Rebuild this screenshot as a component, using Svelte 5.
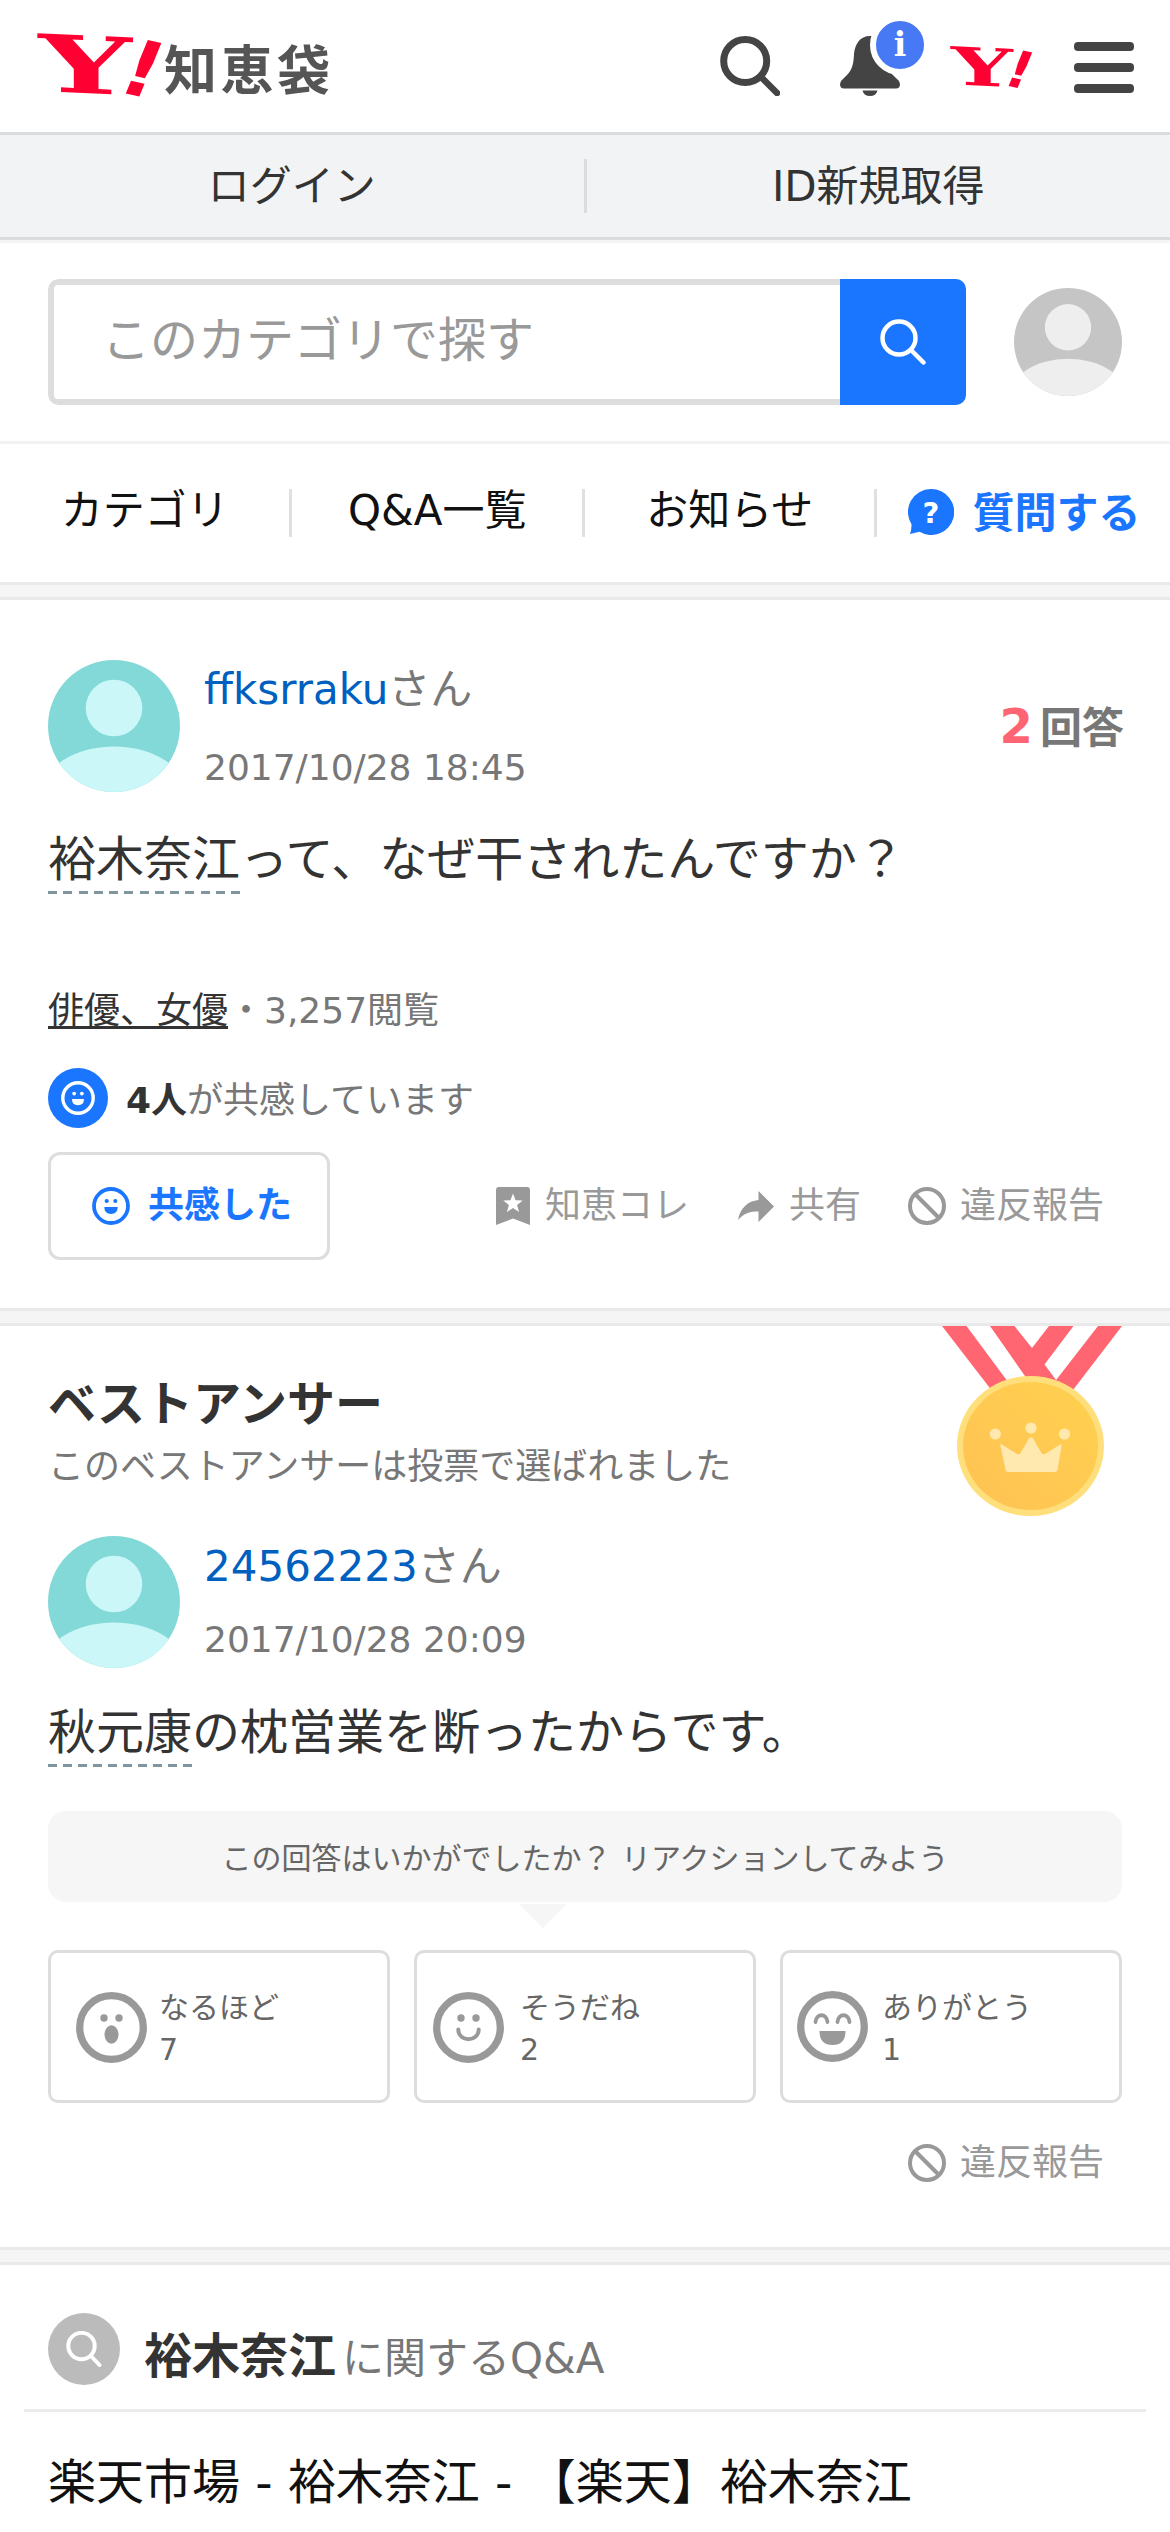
<script>
  const navItems = ['カテゴリ', 'Q&A一覧', 'お知らせ'];

  const reactions = [
    { face: 'surprised', label: 'なるほど', count: 7, pad: 25, gap: 12, top: 2 },
    { face: 'smile', label: 'そうだね', count: 2, pad: 16, gap: 16, top: 1 },
    { face: 'laugh', label: 'ありがとう', count: 1, pad: 14, gap: 14, top: 0 }
  ];
</script>

{#snippet yLogo()}
  <svg class="y-logo" viewBox="0 0 117 62" role="img" aria-label="Y!">
    <g fill="#ff0033" font-family="'DejaVu Serif', serif" font-weight="700">
      <text transform="matrix(1.53 0.07 0 1.1 -0.5 58)" font-size="72" textLength="61" lengthAdjust="spacingAndGlyphs">Y</text>
      <text transform="matrix(1.3 0.3 -0.42 1.02 76 58)" font-size="72" font-family="'DejaVu Sans', sans-serif" textLength="27" lengthAdjust="spacingAndGlyphs">!</text>
    </g>
  </svg>
{/snippet}

{#snippet avatar(id, bg, fg)}
  <svg class="avatar" viewBox="0 0 132 132">
    <clipPath {id}><circle cx="66" cy="66" r="66" /></clipPath>
    <g clip-path="url(#{id})">
      <rect width="132" height="132" fill={bg} />
      <circle cx="66" cy="48" r="28.3" fill={fg} />
      <ellipse cx="66" cy="133.5" rx="72" ry="47" fill={fg} />
    </g>
  </svg>
{/snippet}

{#snippet smallFace()}
  <svg class="small-face" viewBox="0 0 38 38">
    <circle cx="19" cy="19" r="17" fill="none" stroke="currentColor" stroke-width="3.8" />
    <circle cx="14.7" cy="14" r="2.1" fill="currentColor" />
    <circle cx="23.3" cy="14" r="2.1" fill="currentColor" />
    <path d="M12.3 20h13.4q0 7-6.7 7t-6.7-7z" fill="currentColor" />
  </svg>
{/snippet}

{#snippet banIcon()}
  <svg width="38" height="38" viewBox="0 0 38 38" fill="none" stroke="#999" stroke-width="4">
    <circle cx="19" cy="19" r="17" />
    <path d="M7 7l24 24" />
  </svg>
{/snippet}

<div class="page">
  <header class="masthead">
    <div class="brand">
      {@render yLogo()}
      <span class="brand-name">知恵袋</span>
    </div>
    <div class="tools">
      <svg width="60" height="60" viewBox="0 0 60 60" fill="none" stroke="#444">
        <circle cx="25.2" cy="25" r="21.5" stroke-width="7" />
        <path d="M41 41l16 16" stroke-width="6.5" stroke-linecap="round" />
      </svg>
      <div class="bell">
        <svg width="60" height="60" viewBox="0 0 60 60" fill="#444">
          <path d="M30 0C20 0 15 8 14 18C13.400 30 12 35 3 43Q0 45 0 48Q0 52.500 4 52.500H56Q60 52.500 60 48Q60 45 57 43C48 35 46.600 30 46 18C45 8 40 0 30 0z" />
          <path d="M22.500 54.500h15q-1.500 5.500-7.500 5.500t-7.500-5.500z" />
        </svg>
        <span class="bell-badge">i</span>
      </div>
      <div class="mini-logo">{@render yLogo()}</div>
      <div class="burger"><i></i><i></i><i></i></div>
    </div>
  </header>

  <div class="login">
    <a href="#login">ログイン</a>
    <a href="#signup">ID新規取得</a>
  </div>

  <div class="search">
    <div class="search-box">
      <span class="placeholder">このカテゴリで探す</span>
      <span class="search-btn">
        <svg width="46" height="46" viewBox="0 0 46 46" fill="none" stroke="#fff">
          <circle cx="19" cy="19" r="16.500" stroke-width="4.500" />
          <path d="M31 31l12.500 12.500" stroke-width="4.500" stroke-linecap="round" />
        </svg>
      </span>
    </div>
    <div class="me">{@render avatar('me', '#c5c5c5', '#eeeeee')}</div>
  </div>

  <nav class="nav">
    {#each navItems as item}
      <a href="#nav">{item}</a>
    {/each}
    <a href="#ask" class="ask">
      <svg width="46" height="46" viewBox="0 0 46 46">
        <path d="M23 0a23 23 0 1 1-11.500 42.800L2 45Q3.500 41 3.600 35.500A23 23 0 0 1 23 0z" fill="#1a75ff" />
        <text x="23" y="33.500" text-anchor="middle" font-size="29" font-weight="700" fill="#fff" font-family="'DejaVu Sans', sans-serif">?</text>
      </svg>
      <b>質問する</b>
    </a>
  </nav>

  <div class="divider"></div>

  <section class="question">
    <div class="user">
      {@render avatar('asker', '#82d9d8', '#cbf7f8')}
      <div class="user-info">
        <p class="name"><a href="#user">ffksrraku</a>さん</p>
        <p class="date">2017/10/28 18:45</p>
      </div>
      <p class="answers"><strong>2</strong>回答</p>
    </div>
    <p class="body-text"><span class="keyword kw-four">裕木奈江</span>って、なぜ干されたんですか？</p>
    <p class="meta"><a href="#category">俳優、女優</a>・3,257閲覧</p>
    <div class="empathy">
      <span class="empathy-icon">{@render smallFace()}</span>
      <p><b>4人</b>が共感しています</p>
    </div>
    <div class="actions">
      <button class="empathy-btn">{@render smallFace()}<span>共感した</span></button>
      <span class="action">
        <svg width="34" height="38" viewBox="0 0 34 38">
          <path d="M3 0h28q3 0 3 3v35l-17-6.500L0 38V3q0-3 3-3z" fill="#999" />
          <path d="M17 6.500l2.600 6.800 7.100.3-5.600 4.400 2 7.100-6.100-4.100-6.100 4.100 2-7.100-5.600-4.400 7.100-.3z" fill="#fff" />
        </svg>
        知恵コレ
      </span>
      <span class="action share">
        <svg width="36" height="31" viewBox="0 0 36 31">
          <path d="M20.500 0L36 15.500 20.500 31V20.500C12 20.500 6 22 0 29C2 17 10 10 20.500 9z" fill="#999" />
        </svg>
        共有
      </span>
      <span class="action report">{@render banIcon()}違反報告</span>
    </div>
  </section>

  <div class="divider"></div>

  <section class="best">
    <svg class="medal" width="180" height="190" viewBox="0 0 180 190">
      <defs>
        <linearGradient id="gold" x1="0" y1="1" x2="1" y2="0">
          <stop offset="0" stop-color="#ffc254" />
          <stop offset="1" stop-color="#ffd14f" />
        </linearGradient>
      </defs>
      <g fill="#ff6672">
        <path d="M0 0h24.500L69 60 54 70z" />
        <path d="M48 0h24.500L90 22 107 0h24.500L102.500 38.500 120 62 90 60z" />
        <path d="M156 0h24L131 64 111 58z" />
      </g>
      <ellipse cx="88.500" cy="120" rx="73.500" ry="70" fill="#ffdf7c" />
      <ellipse cx="88.500" cy="120" rx="67.500" ry="64" fill="url(#gold)" />
      <g fill="#ffe9ae">
        <circle cx="53.300" cy="108" r="5.600" />
        <circle cx="89" cy="102" r="5.600" />
        <circle cx="122.500" cy="108" r="5.600" />
        <path d="M59 118L75 128Q77 129 78.500 127L87 112.500Q89 110 91 112.500L99.500 127Q101 129 103 128L119 118Q120 118 119.500 120L115.500 144Q115 146 113 146H66Q64 146 63.600 144L58.500 120Q58 118 59 118z" />
      </g>
    </svg>
    <h2>ベストアンサー</h2>
    <p class="best-sub">このベストアンサーは投票で選ばれました</p>
    <div class="user">
      {@render avatar('answerer', '#82d9d8', '#cbf7f8')}
      <div class="user-info tight">
        <p class="name"><a href="#user">24562223</a>さん</p>
        <p class="date">2017/10/28 20:09</p>
      </div>
    </div>
    <p class="body-text"><span class="keyword">秋元康</span>の枕営業を断ったからです。</p>
    <div class="bubble">この回答はいかがでしたか？ リアクションしてみよう</div>
    <div class="reactions">
      {#each reactions as r}
        <button class="reaction" style="padding-left: {r.pad}px; gap: {r.gap}px">
          <svg width="71" height="71" viewBox="0 0 71 71" fill="#999" style="margin-top: {r.top}px">
            <circle cx="35.500" cy="35.500" r="31.800" fill="none" stroke="#999" stroke-width="7.300" />
            {#if r.face === 'surprised'}
              <circle cx="28" cy="26" r="3.700" />
              <circle cx="43" cy="26" r="3.700" />
              <ellipse cx="35.500" cy="42.500" rx="7" ry="9.300" />
            {:else if r.face === 'smile'}
              <circle cx="28" cy="26" r="3.700" />
              <circle cx="43" cy="26" r="3.700" />
              <path d="M25.300 37.500c0 13 20.400 13 20.400 0" fill="none" stroke="#999" stroke-width="4" stroke-linecap="round" />
            {:else}
              <path d="M18.500 31c1-9 11-9 12 0M40.500 31c1-9 11-9 12 0" fill="none" stroke="#999" stroke-width="3.800" stroke-linecap="round" />
              <path d="M22.500 40h26q0 14-13 14t-13-14z" />
            {/if}
          </svg>
          <span>{r.label}<br />{r.count}</span>
        </button>
      {/each}
    </div>
    <p class="best-report">{@render banIcon()}違反報告</p>
  </section>

  <div class="divider"></div>

  <section class="related">
    <div class="related-head">
      <span class="related-icon">
        <svg width="36" height="36" viewBox="0 0 36 36" fill="none" stroke="#fff" stroke-width="4">
          <circle cx="15.500" cy="15" r="13.200" />
          <path d="M25 25l8.500 9" stroke-linecap="round" />
        </svg>
      </span>
      <p><b>裕木奈江</b>に関するQ&A</p>
    </div>
    <a class="related-link" href="#q">楽天市場 - 裕木奈江 - 【楽天】裕木奈江</a>
  </section>
</div>

<style>
  :global(body) {
    background: #fff;
  }
  .page {
    width: 1170px;
    height: 2532px;
    overflow: hidden;
    box-sizing: border-box;
    background: #fff;
    color: #333;
    font-family: 'DejaVu Sans', 'Noto Sans CJK JP', sans-serif;
    font-size: 36px;
  }
  .page :global(*) {
    box-sizing: border-box;
  }
  p, h2 {
    margin: 0;
    white-space: nowrap;
  }
  a {
    color: inherit;
    text-decoration: none;
  }
  svg {
    display: block;
    flex: none;
  }
  button {
    font: inherit;
    background: #fff;
    border: 3px solid #ddd;
    padding: 0;
  }

  /* header */
  .masthead {
    height: 132px;
    padding: 0 36px 0 39px;
    display: flex;
    justify-content: space-between;
  }
  .brand {
    display: flex;
    padding-top: 33px;
    gap: 8px;
  }
  .y-logo {
    width: 117px;
    height: 62px;
    overflow: visible;
  }
  .brand-name {
    font-family: 'Noto Sans CJK JP', sans-serif;
    font-size: 53px;
    font-weight: 700;
    letter-spacing: 3.500px;
    line-height: 68px;
    color: #555;
  }
  .tools {
    display: flex;
    padding-top: 36px;
  }
  .bell {
    position: relative;
    margin-left: 60px;
  }
  .bell-badge {
    position: absolute;
    left: 30px;
    top: -21px;
    width: 60px;
    height: 60px;
    border: 6px solid #fff;
    border-radius: 50%;
    background: #4879f5;
    color: #fff;
    text-align: center;
    font: 700 33px/47px 'DejaVu Serif', serif;
  }
  .mini-logo {
    margin: 10px 45px 0 51px;
  }
  .mini-logo .y-logo {
    width: 78px;
    height: 41px;
  }
  .burger {
    display: flex;
    flex-direction: column;
    gap: 12px;
    padding-top: 6px;
  }
  .burger i {
    width: 60px;
    height: 9px;
    border-radius: 4px;
    background: #444;
  }

  .login {
    display: flex;
    align-items: center;
    height: 108px;
    border-top: 3px solid #dadcde;
    border-bottom: 3px solid #dadcde;
    box-shadow: 0 3px 0 #f4f5f6;
    background: #f1f3f5;
  }
  .login a {
    flex: 1;
    height: 54px;
    text-align: center;
    font-size: 42px;
    line-height: 56px;
  }
  .login a + a {
    border-left: 3px solid #dadcde;
  }

  /* search */
  .search {
    display: flex;
    align-items: center;
    justify-content: space-between;
    height: 204px;
    padding: 0 48px;
    border-bottom: 3px solid #f2f2f2;
  }
  .search-box {
    display: flex;
    width: 918px;
    height: 126px;
    margin-top: 3px;
    border-radius: 10px;
    overflow: hidden;
  }
  .placeholder {
    flex: 1;
    padding-left: 48px;
    border: 6px solid #ddd;
    border-right: 0;
    border-radius: 10px 0 0 10px;
    font-size: 48px;
    line-height: 110px;
    color: #999;
  }
  .search-btn {
    display: grid;
    place-items: center;
    width: 126px;
    background: #1a75ff;
  }
  .me {
    width: 108px;
    margin-top: 3px;
  }
  .avatar {
    width: 132px;
    height: 132px;
  }
  .me .avatar {
    width: 108px;
    height: 108px;
  }

  .nav {
    display: flex;
    height: 138px;
    padding-top: 45px;
    color: #111;
    font-size: 42px;
  }
  .nav a {
    width: 293px;
    height: 48px;
    line-height: 44px;
    text-align: center;
    border-right: 3px solid #e0e0e0;
    white-space: nowrap;
  }
  .nav .ask {
    display: flex;
    gap: 18px;
    padding-left: 31px;
    border: 0;
    color: #1a75ff;
    line-height: 50px;
  }

  .divider {
    height: 18px;
    border-top: 3px solid #e9e9e9;
    border-bottom: 3px solid #e9e9e9;
    background: #f5f5f5;
  }

  /* question */
  .question {
    height: 708px;
    padding: 60px 48px 0;
  }
  .user {
    display: flex;
    height: 132px;
  }
  .user-info {
    flex: 1;
    padding: 0 0 0 24px;
  }
  .name {
    font-size: 42px;
    line-height: 60px;
    color: #777;
  }
  .name a {
    color: #0060c0;
  }
  .date {
    margin-top: 24px;
    line-height: 48px;
    color: #777;
  }
  .tight {
    padding-top: 1px;
  }
  .tight .date {
    margin-top: 19px;
  }
  .answers {
    display: flex;
    gap: 7px;
    margin-right: -2px;
    font-size: 42px;
    font-weight: 700;
    line-height: 132px;
    color: #777;
    align-items: baseline;
  }
  .answers strong {
    font-size: 48px;
    color: #ff6472;
  }
  .body-text {
    margin-top: 31px;
    font-size: 48px;
    line-height: 72px;
  }
  .keyword {
    display: inline-block;
    background: repeating-linear-gradient(90deg, #8095a0 0 9px, transparent 9px 15px) 0 calc(100% - 1px) / 100% 3px no-repeat;
  }
  .kw-four {
    background-image: repeating-linear-gradient(90deg, #8095a0 0 9px, transparent 9px 15.250px);
  }
  .meta {
    margin-top: 92px;
    line-height: 48px;
    color: #777;
  }
  .meta a {
    color: #333;
    text-decoration: underline;
    text-decoration-thickness: 3px;
    text-decoration-skip-ink: none;
    text-underline-offset: 3px;
  }
  .empathy {
    display: flex;
    align-items: center;
    gap: 18px;
    height: 60px;
    margin-top: 33px;
    color: #777;
  }
  .empathy p {
    line-height: 48px;
    padding-top: 5px;
  }
  .empathy b {
    color: #333;
  }
  .empathy-icon {
    display: grid;
    place-items: center;
    width: 60px;
    height: 60px;
    border-radius: 50%;
    background: #1a75ff;
    color: #fff;
  }
  .small-face {
    width: 38px;
    height: 38px;
  }
  .empathy-icon .small-face {
    width: 34px;
    height: 34px;
  }
  .actions {
    display: flex;
    align-items: center;
    margin-top: 24px;
  }
  .empathy-btn {
    display: flex;
    align-items: center;
    gap: 18px;
    width: 282px;
    height: 108px;
    padding-left: 41px;
    border-radius: 12px;
    color: #1a75ff;
    font-weight: 700;
    white-space: nowrap;
  }
  .empathy-btn span {
    line-height: 42px;
    padding-bottom: 1px;
  }
  .action,
  .best-report {
    display: flex;
    align-items: center;
    gap: 15px;
    line-height: 42px;
    color: #999;
    white-space: nowrap;
  }
  .action {
    margin-left: 166px;
  }
  .share {
    margin-left: 49px;
  }
  .report {
    margin-left: 47px;
    gap: 14px;
  }

  /* best answer */
  .best {
    position: relative;
    height: 921px;
    padding: 42px 48px 0;
  }
  .medal {
    position: absolute;
    top: 0;
    left: 942px;
  }
  h2 {
    font-size: 48px;
    line-height: 72px;
  }
  .best-sub {
    line-height: 54px;
    color: #777;
  }
  .best .user {
    margin-top: 42px;
  }
  .best .body-text {
    margin-top: 28px;
  }
  .bubble {
    position: relative;
    height: 91px;
    margin-top: 43px;
    border-radius: 18px;
    background: #f6f6f6;
    text-align: center;
    font-size: 30px;
    line-height: 96px;
    color: #666;
  }
  .bubble::after {
    content: '';
    position: absolute;
    left: 471px;
    top: 93px;
    border: 24px solid transparent;
    border-top-color: #f6f6f6;
    border-bottom: 0;
  }
  .reactions {
    display: grid;
    grid-template-columns: repeat(3, 1fr);
    gap: 24px;
    margin-top: 48px;
  }
  .reaction {
    display: flex;
    align-items: center;
    height: 153px;
    border-radius: 10px;
    text-align: left;
    font-size: 30px;
    line-height: 42px;
    color: #666;
  }
  .reaction span {
    padding-top: 5px;
  }
  .best-report {
    justify-content: flex-end;
    gap: 14px;
    margin: 39px 18px 0 0;
  }

  /* related */
  .related {
    padding: 0 24px;
  }
  .related-head {
    display: flex;
    align-items: flex-start;
    height: 147px;
    padding: 48px 24px 0;
    gap: 24px;
    border-bottom: 3px solid #ebebeb;
    margin-bottom: 34px;
  }
  .related-icon {
    display: grid;
    place-items: center;
    width: 72px;
    height: 72px;
    border-radius: 50%;
    background: #bbb;
  }
  .related-head p {
    display: flex;
    align-items: baseline;
    gap: 6px;
    font-size: 42px;
    line-height: 72px;
    color: #777;
    padding-top: 7px;
  }
  .related-head b {
    font-size: 48px;
    color: #333;
  }
  .related-link {
    display: block;
    padding-left: 24px;
    font-size: 48px;
    line-height: 72px;
    color: #111;
    white-space: nowrap;
  }
</style>
